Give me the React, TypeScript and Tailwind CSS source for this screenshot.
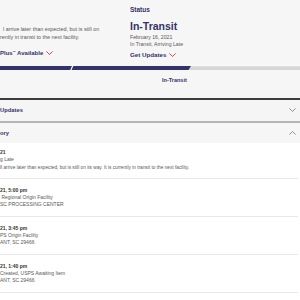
import React from "react";

const Chevron = ({ up = false, color = "#777", w = 7, h = 4, sw = 0.8 }: { up?: boolean; color?: string; w?: number; h?: number; sw?: number }) => (
  <svg width={w} height={h} viewBox="0 0 7 4" fill="none">
    {up ? (
      <polyline points="0.4,3.6 3.5,0.5 6.6,3.6" stroke={color} strokeWidth={sw} />
    ) : (
      <polyline points="0.4,0.4 3.5,3.5 6.6,0.4" stroke={color} strokeWidth={sw} />
    )}
  </svg>
);

const items = [
  { d: "21", l1: "g Late", l2: "ll arrive later than expected, but is still on its way. It is currently in transit to the next facility.", small: true },
  { d: "21, 5:00 pm", l1: " Regional Origin Facility", l2: "SC PROCESSING CENTER", small: false },
  { d: "21, 3:45 pm", l1: "PS Origin Facility", l2: "ANT, SC 29466", small: false },
  { d: "21, 1:40 pm", l1: "Created, USPS Awaiting Item", l2: "ANT, SC 29466", small: false },
];

export default function App() {
  return (
    <div className="w-[300px] h-[300px] overflow-hidden bg-white font-['Liberation_Sans',Arial,sans-serif]">
      <div className="h-[98px] bg-[#f6f6f6] flex flex-col">
        <div className="flex h-[64px]">
          <div className="w-[130px] pt-[25px] text-[#595959]">
            <div className="text-[5.4px] leading-[8px] whitespace-nowrap pl-[3px]">l arrive later than expected, but is still on</div>
            <div className="text-[5.4px] leading-[8px] whitespace-nowrap">rently in transit to the next facility.</div>
            <div className="mt-[8px] flex items-center gap-[3px] h-[8px]">
              <span className="text-[6px] font-bold text-[#333366] whitespace-nowrap">Plus<sup className="text-[3px]">™</sup> Available</span>
              <Chevron color="#e71921" />
            </div>
          </div>
          <div className="flex-1 pt-[6px] text-[#333366]">
            <div className="text-[6.5px] leading-[8px] font-bold">Status</div>
            <div className="mt-[6px] text-[10.5px] leading-[12px] font-bold">In-Transit</div>
            <div className="mt-[1.5px] text-[5.2px] leading-[7px] text-[#595959]">February 16, 2021</div>
            <div className="text-[5.2px] leading-[7px] text-[#595959]">In Transit, Arriving Late</div>
            <div className="mt-[3.5px] flex items-center gap-[3px] h-[8px]">
              <span className="text-[6.2px] font-bold">Get Updates</span>
              <Chevron color="#e71921" />
            </div>
          </div>
        </div>
        <svg width="300" height="8" viewBox="0 0 300 8" className="block">
          <rect x="186" y="2.3" width="114" height="3.7" fill="#d6d6d6" />
          <polygon points="0,2 191,2 188.5,6 0,6" fill="#333366" />
          <line x1="73.2" y1="0.8" x2="70.2" y2="7.4" stroke="#f6f6f6" strokeWidth="1.3" />
        </svg>
        <div className="mt-[4.5px] pl-[162px] text-[5.5px] leading-[7px] font-bold text-[#333366]">In-Transit</div>
      </div>
      <div className="h-[1.5px] bg-[#3d3d3d]" />
      <div className="h-[21.5px] bg-[#f5f5f5] flex items-center justify-between pr-[4px]">
        <span className="text-[5.8px] font-bold text-[#333366]">Updates</span>
        <Chevron />
      </div>
      <div className="h-[2px] bg-[#b5b5b5]" />
      <div className="h-[20px] bg-[#f6f6f6] flex items-center justify-between pr-[4px]">
        <span className="text-[5.8px] font-bold text-[#333366]">ory</span>
        <Chevron up />
      </div>
      <div className="pr-[2px]">
        {items.map((it, i) => (
          <div key={i} className={`${i === 0 ? "pt-[6px]" : "pt-[7.5px]"} pb-[7.5px] border-b border-[#e8e8e8]`}>
            <div className="text-[5px] leading-[7.3px] font-bold text-[#333333] whitespace-nowrap">{it.d}</div>
            <div className="text-[5px] leading-[7.3px] text-[#595959] whitespace-pre">{it.l1}</div>
            <div className={`${it.small ? "text-[4.75px]" : "text-[5px]"} leading-[7.3px] text-[#595959] whitespace-nowrap`}>{it.l2}</div>
          </div>
        ))}
      </div>
    </div>
  );
}
